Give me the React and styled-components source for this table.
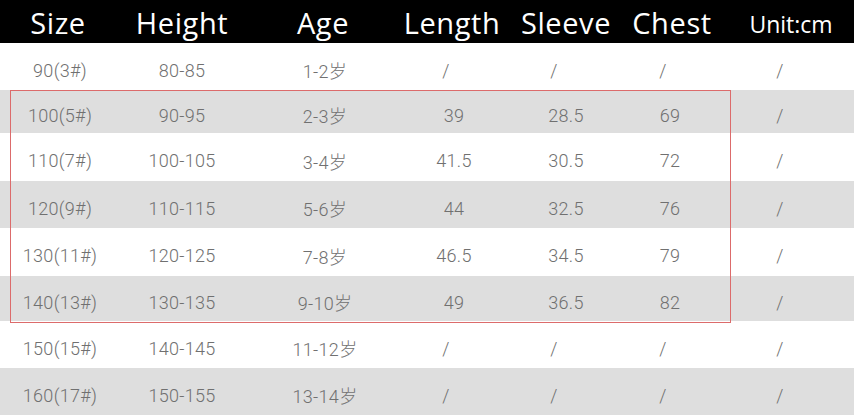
import React from "react";
import styled, { createGlobalStyle } from "styled-components";

const Global = createGlobalStyle`
  html, body { margin: 0; padding: 0; background: #ffffff; }
  #root { width: 854px; height: 415px; overflow: hidden; }
`;

const COLS = "116px 132px 150px 112px 112px 96px 136px";

const Table = styled.div`
  position: relative;
  width: 854px;
  display: flex;
  flex-direction: column;
`;

const HeaderRow = styled.div`
  display: grid;
  grid-template-columns: ${COLS};
  height: 43px;
  background: #000000;
  align-items: center;
`;

const HeadCell = styled.div`
  color: #ffffff;
  font-family: "Open Sans", "Noto Sans", sans-serif;
  font-size: ${(p) => (p.$small ? "23px" : "29px")};
  letter-spacing: ${(p) => (p.$small ? "0" : "0.6px")};
  text-align: center;
  line-height: 1;
  padding-top: ${(p) => (p.$small ? "5px" : "2px")};
  transform: translateX(${(p) => p.$dx || 0}px);
  white-space: nowrap;
`;

const Row = styled.div`
  display: grid;
  grid-template-columns: ${COLS};
  height: ${(p) => p.$h}px;
  background: ${(p) => (p.$shade ? "#dedede" : "#ffffff")};
  align-items: center;
`;

const Cell = styled.div`
  color: #707070;
  font-family: Roboto, "Noto Sans CJK SC", sans-serif;
  font-weight: 300;
  font-size: 18px;
  letter-spacing: 0.3px;
  text-align: center;
  padding-top: 7px;
  transform: translateX(${(p) => p.$dx || 0}px);
  white-space: nowrap;
`;

const Highlight = styled.div`
  position: absolute;
  left: 10px;
  top: 90px;
  width: 719px;
  height: 231px;
  border: 1px solid #dc6b6b;
  pointer-events: none;
`;

const headers = [
  { t: "Size" },
  { t: "Height" },
  { t: "Age" },
  { t: "Length", dx: -2 },
  { t: "Sleeve" },
  { t: "Chest", dx: 2 },
  { t: "Unit:cm", small: true, dx: 5 },
];

const rows = [
  { h: 47, c: ["90(3#)", "80-85", "1-2岁", "/", "/", "/", "/"] },
  { h: 43, c: ["100(5#)", "90-95", "2-3岁", "39", "28.5", "69", "/"] },
  { h: 48, c: ["110(7#)", "100-105", "3-4岁", "41.5", "30.5", "72", "/"] },
  { h: 47, c: ["120(9#)", "110-115", "5-6岁", "44", "32.5", "76", "/"] },
  { h: 48, c: ["130(11#)", "120-125", "7-8岁", "46.5", "34.5", "79", "/"] },
  { h: 45, c: ["140(13#)", "130-135", "9-10岁", "49", "36.5", "82", "/"] },
  { h: 47, c: ["150(15#)", "140-145", "11-12岁", "/", "/", "/", "/"] },
  { h: 47, c: ["160(17#)", "150-155", "13-14岁", "/", "/", "/", "/"] },
];

const colShift = (ci, text) => {
  if (ci === 6) return -6;
  if (text === "/") return [0, 0, 0, -8, -12, -7][ci] || 0;
  if (ci === 2) return 2;
  if (ci === 0) return 2;
  return 0;
};

export default function App() {
  return (
    <>
      <Global />
      <Table>
        <HeaderRow>
          {headers.map((h) => (
            <HeadCell key={h.t} $small={h.small} $dx={h.dx}>
              {h.t}
            </HeadCell>
          ))}
        </HeaderRow>
        {rows.map((r, ri) => (
          <Row key={ri} $h={r.h} $shade={ri % 2 === 1}>
            {r.c.map((t, ci) => (
              <Cell key={ci} $dx={colShift(ci, t)}>
                {t}
              </Cell>
            ))}
          </Row>
        ))}
        <Highlight />
      </Table>
    </>
  );
}
